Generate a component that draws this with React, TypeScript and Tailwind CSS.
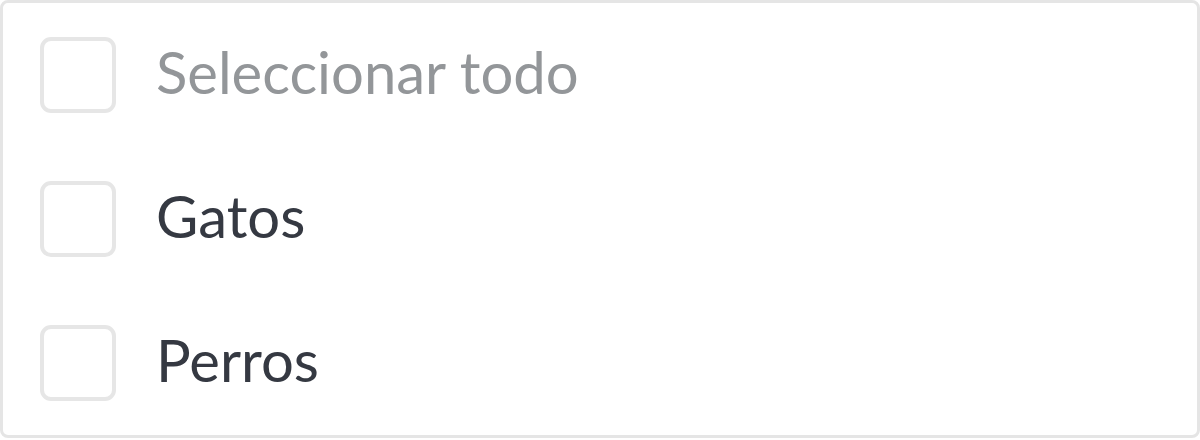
import React from "react";

const items = [
  { label: "Seleccionar todo", muted: true },
  { label: "Gatos", muted: false },
  { label: "Perros", muted: false },
];

export default function App() {
  return (
    <div className="w-[1200px] h-[440px] bg-white">
      <div className="h-[438px] border-[3px] border-[#e5e5e5] rounded-[8px] flex flex-col">
        {items.map((it) => (
          <div key={it.label} className="h-[144px] flex items-center pl-[37px] gap-[40px]">
            <div className="w-[76px] h-[76px] rounded-[11px] border-[4px] border-[#e6e6e6] shrink-0" />
            <span
              className={`text-[58px] leading-none pb-[6px] ${it.muted ? "text-[#939699]" : "text-[#353942]"}`}
              style={{ fontFamily: "Lato, 'Noto Sans', sans-serif" }}
            >
              {it.label}
            </span>
          </div>
        ))}
      </div>
    </div>
  );
}
